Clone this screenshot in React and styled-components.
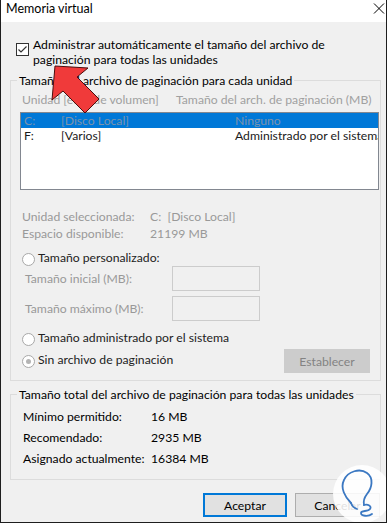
import React from "react";
import styled, { createGlobalStyle } from "styled-components";

const GlobalStyle = createGlobalStyle`
  html, body { margin: 0; padding: 0; background: #f0f0f0; }
  body { font-family: Lato, "Noto Sans", sans-serif; font-size: 12.2px; color: #000; }
  * { box-sizing: border-box; }
`;

const Window = styled.div`
  position: relative;
  width: 387px;
  height: 523px;
  border: 1px solid #1e1e1e;
  border-top: none;
  background: #f0f0f0;
  display: flex;
  flex-direction: column;
  overflow: hidden;
`;

const TitleBar = styled.div`
  height: 22px;
  flex: none;
  background: #fff;
  display: flex;
  align-items: flex-start;
  justify-content: space-between;
  padding: 1px 1px 0 5px;
  line-height: 15px;
  font-size: 12.5px;
`;

const CloseIcon = styled.svg`
  width: 12px;
  height: 12px;
  margin-top: 2px;
`;

const Body = styled.div`
  flex: 1;
  display: flex;
  flex-direction: column;
  padding: 15px 5px 0 9px;
`;

const CheckRow = styled.label`
  display: flex;
  align-items: flex-start;
  gap: 4px;
  margin-left: 6px;
  line-height: 15px;
`;

const CheckBox = styled.span`
  flex: none;
  width: 13px;
  height: 13px;
  margin-top: 6px;
  border: 1px solid #333;
  background: #fff;
  display: flex;
  align-items: center;
  justify-content: center;
`;

const Group = styled.fieldset`
  margin: ${(p) => p.$top}px 0 0;
  padding: ${(p) => p.$pad};
  border: 1px solid #dcdcdc;
  min-width: 0;
`;

const Legend = styled.legend`
  margin-left: 6px;
  padding: 0 2px;
  line-height: 15px;
`;

const Headers = styled.div`
  display: grid;
  grid-template-columns: 154px 1fr;
  padding-left: 11px;
  line-height: 15px;
  color: #a0a0a0;
  white-space: nowrap;
`;

const ListBox = styled.div`
  margin: 5px 1px 0 9px;
  height: 78px;
  border: 1px solid #828790;
  background: #fff;
  overflow: hidden;
`;

const ListRow = styled.div`
  display: grid;
  grid-template-columns: 37px 174px 1fr;
  height: 15px;
  line-height: 15px;
  padding-left: 3px;
  white-space: nowrap;
  background: ${(p) => (p.$selected ? "#0078d7" : "transparent")};
  color: ${(p) => (p.$selected ? "#7d93ab" : "#1a1a1a")};
`;

const InfoGrid = styled.div`
  display: grid;
  grid-template-columns: 128px 1fr;
  margin-top: 18px;
  padding-left: 11px;
  line-height: 17px;
  color: #999;
  white-space: nowrap;
`;

const RadioRow = styled.div`
  display: flex;
  align-items: flex-start;
  gap: 3px;
  margin-top: ${(p) => p.$top || 0}px;
  padding-left: 11px;
  line-height: 15px;
  color: #222;
`;

const Radio = styled.span`
  flex: none;
  width: 13px;
  height: 13px;
  margin-top: 3px;
  border-radius: 50%;
  border: 1px solid #a8a8a8;
  background: #fff;
  display: flex;
  align-items: center;
  justify-content: center;
  &::after {
    content: "";
    width: 5px;
    height: 5px;
    border-radius: 50%;
    background: ${(p) => (p.$checked ? "#b4b4b4" : "transparent")};
  }
`;

const FieldRow = styled.div`
  display: flex;
  align-items: center;
  height: 25px;
  margin-top: ${(p) => p.$top || 0}px;
  padding-left: 14px;
  line-height: 15px;
  color: #999;
`;

const FieldLabel = styled.span`
  width: 147px;
`;

const TextBox = styled.div`
  width: 88px;
  height: 25px;
  border: 1px solid #cccccc;
  background: #f0f0f0;
`;

const BottomRow = styled.div`
  display: flex;
  align-items: flex-start;
  justify-content: space-between;
  margin-top: 3px;
  margin-right: 10px;
`;

const BottomRadio = styled(RadioRow)`
  margin-top: 3px;
`;

const Button = styled.button`
  font: inherit;
  height: 24px;
  width: ${(p) => p.$w}px;
  padding: 0;
  background: ${(p) => (p.$disabled ? "#cccccc" : "#e1e1e1")};
  color: ${(p) => (p.$disabled ? "#838383" : "#000")};
  border: ${(p) =>
    p.$primary ? "2px solid #0078d7" : p.$disabled ? "1px solid #cccccc" : "1px solid #adadad"};
  border-radius: 0;
`;

const TotalsGrid = styled.div`
  display: grid;
  grid-template-columns: 128px 1fr;
  padding-left: 12px;
  line-height: 21px;
  white-space: nowrap;
`;

const Footer = styled.div`
  display: flex;
  justify-content: flex-end;
  gap: 8px;
  margin: 13px 1px 0 0;
`;

const Overlay = styled.svg`
  position: absolute;
  left: -1px;
  top: 0;
  width: 387px;
  height: 523px;
  pointer-events: none;
`;

export default function App() {
  return (
    <>
      <GlobalStyle />
      <Window>
        <TitleBar>
          <span>Memoria virtual</span>
          <CloseIcon viewBox="0 0 12 12">
            <path d="M1 0.5 L11 10.5 M11 0.5 L1 10.5" stroke="#000" strokeWidth="1" fill="none" />
          </CloseIcon>
        </TitleBar>
        <Body>
          <CheckRow>
            <CheckBox>
              <svg width="11" height="11" viewBox="0 0 11 11">
                <path d="M1.5 5.5 L4 8 L9.5 2.5" stroke="#333" strokeWidth="1.2" fill="none" />
              </svg>
            </CheckBox>
            <span>
              Administrar automáticamente el tamaño del archivo de
              <br />
              paginación para todas las unidades
            </span>
          </CheckRow>

          <Group $top={6} $pad="4px 0 7px 0">
            <Legend>Tamaño del archivo de paginación para cada unidad</Legend>
            <Headers>
              <span>Unidad [etiq. de volumen]</span>
              <span>Tamaño del arch. de paginación (MB)</span>
            </Headers>
            <ListBox>
              <ListRow $selected>
                <span>C:</span>
                <span>[Disco Local]</span>
                <span>Ninguno</span>
              </ListRow>
              <ListRow>
                <span>F:</span>
                <span>[Varios]</span>
                <span>Administrado por el sistema</span>
              </ListRow>
            </ListBox>
            <InfoGrid>
              <span>Unidad seleccionada:</span>
              <span>C:&nbsp; [Disco Local]</span>
              <span>Espacio disponible:</span>
              <span>21199 MB</span>
            </InfoGrid>
            <RadioRow $top={8}>
              <Radio />
              <span>Tamaño personalizado:</span>
            </RadioRow>
            <FieldRow>
              <FieldLabel>Tamaño inicial (MB):</FieldLabel>
              <TextBox />
            </FieldRow>
            <FieldRow $top={5}>
              <FieldLabel>Tamaño máximo (MB):</FieldLabel>
              <TextBox />
            </FieldRow>
            <RadioRow $top={9}>
              <Radio />
              <span>Tamaño administrado por el sistema</span>
            </RadioRow>
            <BottomRow>
              <BottomRadio>
                <Radio $checked />
                <span>Sin archivo de paginación</span>
              </BottomRadio>
              <Button $w={86} $disabled>
                Establecer
              </Button>
            </BottomRow>
          </Group>

          <Group $top={6} $pad="4px 0 10px 0">
            <Legend>Tamaño total del archivo de paginación para todas las unidades</Legend>
            <TotalsGrid>
              <span>Mínimo permitido:</span>
              <span>16 MB</span>
              <span>Recomendado:</span>
              <span>2935 MB</span>
              <span>Asignado actualmente:</span>
              <span>16384 MB</span>
            </TotalsGrid>
          </Group>

          <Footer>
            <Button $w={84} $primary>
              Aceptar
            </Button>
            <Button $w={85}>Cancelar</Button>
          </Footer>
        </Body>

        <Overlay viewBox="0 0 387 523">
          <polygon
            points="55,66 88,68 77,77 99,99 85,113 63,91 52,100"
            fill="#f03a3a"
            stroke="#4a0d0d"
            strokeWidth="1"
            strokeLinejoin="round"
          />
          <circle cx="362" cy="494" r="29" fill="#ffffff" opacity="0.88" />
          <path
            d="M351 503 C345 497 340 488 344 480 C348 471 360 468 367 473 C374 478 372 488 367 494 C364 498 363 501 364 505"
            stroke="#3b78c2"
            strokeWidth="1.8"
            fill="none"
            strokeLinecap="round"
          />
          <path
            d="M351 503 C352 506 354 508 357 509 M364 505 C368 504 372 506 370 509 C368 512 361 510 361 513 C361 516 368 517 372 514"
            stroke="#3b78c2"
            strokeWidth="1.8"
            fill="none"
            strokeLinecap="round"
          />
        </Overlay>
      </Window>
    </>
  );
}
